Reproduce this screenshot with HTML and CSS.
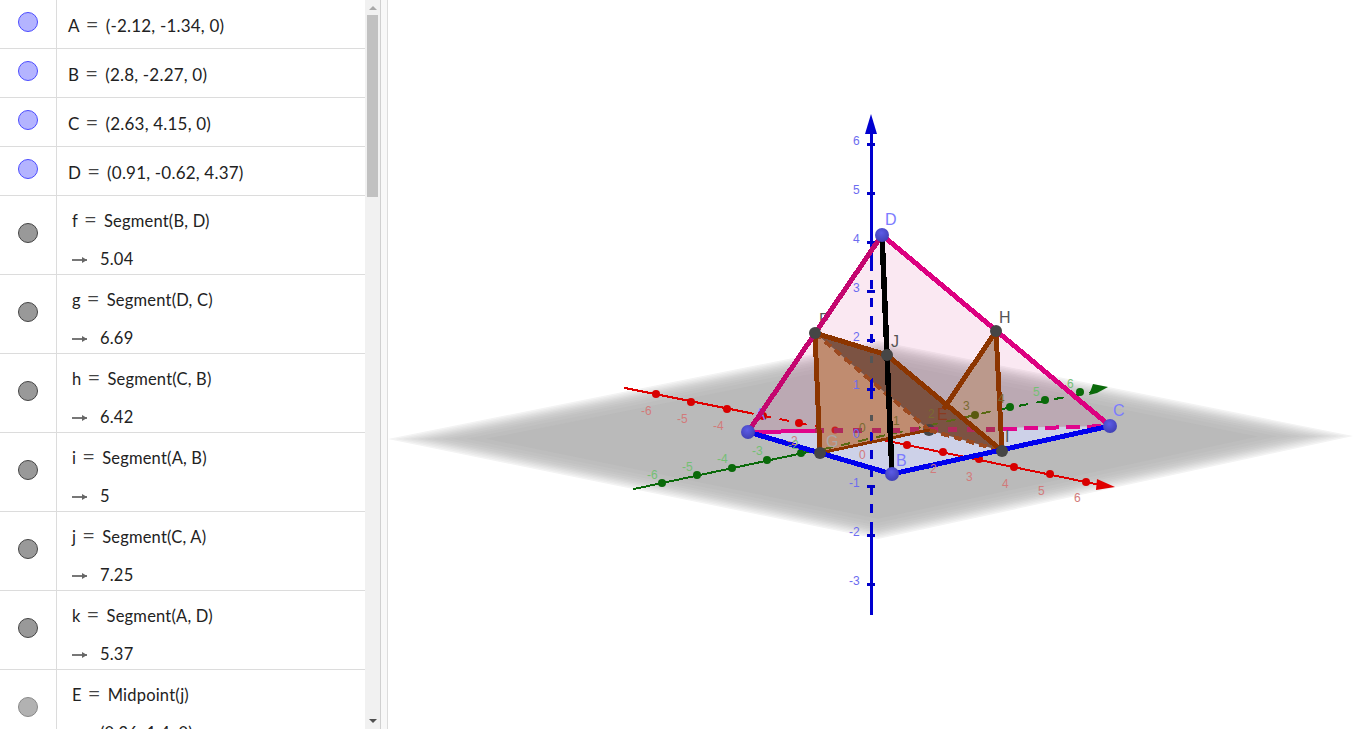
FILE: index.html
```html
<!DOCTYPE html>
<html lang="en">
<head>
    <meta charset="UTF-8">
    <meta name="viewport" content="width=device-width, initial-scale=1.0">
    <title>Pyramid section</title>
    <link rel="stylesheet" href="styles.css">
</head>
<body>
    <div class="app">
        <div class="algebra">
            <div class="rows">
                <div class="row point"><div class="marble-cell"><span class="marble blue"></span></div><div class="def">A<span class="eq">=</span>(-2.12, -1.34, 0)</div></div>
                <div class="row point"><div class="marble-cell"><span class="marble blue"></span></div><div class="def">B<span class="eq">=</span>(2.8, -2.27, 0)</div></div>
                <div class="row point"><div class="marble-cell"><span class="marble blue"></span></div><div class="def">C<span class="eq">=</span>(2.63, 4.15, 0)</div></div>
                <div class="row point"><div class="marble-cell"><span class="marble blue"></span></div><div class="def">D<span class="eq">=</span>(0.91, -0.62, 4.37)</div></div>
                <div class="row tall"><div class="marble-cell"><span class="marble grey"></span></div><div class="def"><p>f<span class="eq">=</span>Segment(B, D)</p><p class="value"><span class="arrow"></span>5.04</p></div></div>
                <div class="row tall"><div class="marble-cell"><span class="marble grey"></span></div><div class="def"><p>g<span class="eq">=</span>Segment(D, C)</p><p class="value"><span class="arrow"></span>6.69</p></div></div>
                <div class="row tall"><div class="marble-cell"><span class="marble grey"></span></div><div class="def"><p>h<span class="eq">=</span>Segment(C, B)</p><p class="value"><span class="arrow"></span>6.42</p></div></div>
                <div class="row tall"><div class="marble-cell"><span class="marble grey"></span></div><div class="def"><p>i<span class="eq">=</span>Segment(A, B)</p><p class="value"><span class="arrow"></span>5</p></div></div>
                <div class="row tall"><div class="marble-cell"><span class="marble grey"></span></div><div class="def"><p>j<span class="eq">=</span>Segment(C, A)</p><p class="value"><span class="arrow"></span>7.25</p></div></div>
                <div class="row tall"><div class="marble-cell"><span class="marble grey"></span></div><div class="def"><p>k<span class="eq">=</span>Segment(A, D)</p><p class="value"><span class="arrow"></span>5.37</p></div></div>
                <div class="row tall"><div class="marble-cell"><span class="marble light"></span></div><div class="def"><p>E<span class="eq">=</span>Midpoint(j)</p><p class="value"><span class="arrow"></span>(0.26, 1.4, 0)</p></div></div>
            </div>
            <div class="scrollbar">
                <span class="scroll-up"></span>
                <div class="track"><div class="thumb"></div></div>
                <span class="scroll-down"></span>
            </div>
        </div>
        <div class="splitter"></div>
        <div class="graphics">
            <svg class="scene" viewBox="388 0 968 729" width="968" height="729">
                <defs>
                    <polygon id="plane" points="388,439 878,341 1353,436 878,539"/>
                    <radialGradient id="ball-blue" cx="0.45" cy="0.35" r="0.65">
                        <stop offset="0" stop-color="#5c5ce6"/>
                        <stop offset="1" stop-color="#4040b4"/>
                    </radialGradient>
                </defs>

                <!-- xOy plane, fades out at the rim -->
                <g class="plane">
                    <use href="#plane" fill="#f3f3f3"/>
                    <use href="#plane" fill="#ebebeb" transform="translate(878 438) scale(.985) translate(-878 -438)"/>
                    <use href="#plane" fill="#e4e4e4" transform="translate(878 438) scale(.97) translate(-878 -438)"/>
                    <use href="#plane" fill="#dddddd" transform="translate(878 438) scale(.955) translate(-878 -438)"/>
                    <use href="#plane" fill="#d6d6d6" transform="translate(878 438) scale(.94) translate(-878 -438)"/>
                    <use href="#plane" fill="#d0d0d0" transform="translate(878 438) scale(.925) translate(-878 -438)"/>
                    <use href="#plane" fill="#cbcbcb" transform="translate(878 438) scale(.91) translate(-878 -438)"/>
                    <use href="#plane" fill="#c6c6c6" transform="translate(878 438) scale(.89) translate(-878 -438)"/>
                    <use href="#plane" fill="#c2c2c2" transform="translate(878 438) scale(.87) translate(-878 -438)"/>
                    <use href="#plane" fill="#bebebe" transform="translate(878 438) scale(.84) translate(-878 -438)"/>
                    <use href="#plane" fill="#bababa" transform="translate(878 438) scale(.8) translate(-878 -438)"/>
                </g>

                <!-- faces -->
                <polygon class="base" points="748,432 892,474 1110,426"/>
                <polygon class="face" points="748,432 882,235 1110,426"/>

                <!-- x axis -->
                <line class="ax-x" x1="625" y1="388" x2="745" y2="412"/>
                <line class="ax-x dash" x1="745" y1="412" x2="878" y2="439"/>
                <line class="ax-x" x1="878" y1="439" x2="1100" y2="485"/>
                <polygon class="tip-x" points="1115,487 1097,479 1096,490"/>
                <g class="tick-x">
                    <circle cx="656" cy="394" r="4"/><circle cx="691" cy="402" r="4"/><circle cx="727" cy="409" r="4"/>
                    <circle cx="763" cy="416" r="4"/><circle cx="799" cy="423" r="4"/>
                    <circle cx="907" cy="445" r="4"/><circle cx="943" cy="452" r="4"/><circle cx="979" cy="459" r="4"/>
                    <circle cx="1014" cy="467" r="4"/><circle cx="1050" cy="474" r="4"/><circle cx="1086" cy="482" r="4"/>
                </g>

                <!-- y axis, near part -->
                <line class="ax-y" x1="634" y1="489" x2="822" y2="449"/>
                <g class="tick-y">
                    <circle cx="662" cy="483" r="4"/><circle cx="697" cy="475" r="4"/><circle cx="732" cy="468" r="4"/>
                    <circle cx="767" cy="460" r="4"/><circle cx="801" cy="453" r="4"/>
                </g>

                <!-- section through the pyramid -->
                <polygon class="sec-salmon" points="815,333 820,453 929,430"/>
                <polygon class="sec-light" points="996,331 1002,451 929,430"/>
                <polygon class="sec-dark" points="815,333 887,355 1002,451 929,430"/>

                <!-- what shows through the section -->
                <circle class="tick-through" cx="835" cy="430" r="3.5"/>
                <line class="ax-y dash olive" x1="824" y1="449" x2="1002" y2="409"/>
                <line class="ax-y dash" x1="1002" y1="409" x2="1092" y2="392"/>
                <polygon class="tip-y" points="1108,387 1093,384 1089,395 1097,393"/>
                <circle class="tick-olive" cx="975" cy="415" r="4"/>
                <g class="tick-y">
                    <circle cx="1010" cy="407" r="4"/><circle cx="1045" cy="400" r="4"/><circle cx="1080" cy="392" r="4"/>
                </g>

                <!-- z axis -->
                <line class="ax-z" x1="871" y1="125" x2="871" y2="262"/>
                <line class="ax-z dash-z" x1="871" y1="262" x2="871" y2="352"/>
                <line class="ax-z grey" x1="871" y1="356" x2="871" y2="363"/>
                <line class="ax-z" x1="871" y1="378" x2="871" y2="399"/>
                <line class="ax-z grey" x1="871" y1="415" x2="871" y2="421"/>
                <line class="ax-z dash-z" x1="871" y1="432" x2="871" y2="528"/>
                <line class="ax-z" x1="871" y1="528" x2="871" y2="615"/>
                <polygon class="tip-z" points="871,114 865,134 877,134"/>
                <g class="tick-z">
                    <rect x="867" y="143" width="8" height="3"/><rect x="867" y="192" width="8" height="3"/><rect x="867" y="241" width="8" height="3"/>
                    <rect x="867" y="290" width="8" height="3"/><rect x="867" y="339" width="8" height="3"/><rect x="867" y="388" width="8" height="3"/>
                    <rect x="867" y="485" width="8" height="3"/><rect x="867" y="534" width="8" height="3"/><rect x="867" y="583" width="8" height="3"/>
                </g>

                <!-- names that the edges run over -->
                <g class="name">
                    <text class="name-blue" x="755" y="420">A</text>
                    <text class="name-grey" x="819" y="325">F</text>
                    <text class="name-brown" x="937" y="420">E</text>
                </g>
                <circle class="dot-dark" cx="929" cy="430" r="6"/>

                <!-- edge AC, dashed where it runs behind -->
                <line class="edge-ac" x1="748" y1="432" x2="815" y2="431"/>
                <line class="edge-ac dash-ac" x1="815" y1="431" x2="1000" y2="429"/>
                <line class="edge-ac dash-wide" x1="1003" y1="429" x2="1110" y2="426"/>

                <!-- section edges -->
                <line class="brown dash-b" x1="815" y1="333" x2="929" y2="430"/>
                <line class="brown dash-b" x1="929" y1="430" x2="1002" y2="451"/>
                <line class="brown thin" x1="820" y1="453" x2="929" y2="430"/>
                <line class="brown" x1="945" y1="407" x2="996" y2="331"/>
                <line class="brown" x1="815" y1="333" x2="820" y2="453"/>
                <line class="brown" x1="996" y1="331" x2="1002" y2="451"/>
                <line class="brown" x1="815" y1="333" x2="887" y2="355"/>
                <line class="brown" x1="887" y1="355" x2="1002" y2="451"/>

                <!-- pyramid edges -->
                <line class="edge-blue" x1="748" y1="432" x2="892" y2="474"/>
                <line class="edge-blue" x1="892" y1="474" x2="1110" y2="426"/>
                <line class="edge-pink-l" x1="748" y1="432" x2="882" y2="235"/>
                <line class="edge-pink-r" x1="882" y1="235" x2="1110" y2="426"/>
                <line class="edge-black" x1="882" y1="235" x2="892" y2="474"/>

                <!-- axis numbers -->
                <g class="num num-z">
                    <text x="853" y="145">6</text><text x="853" y="194">5</text><text x="853" y="243">4</text><text x="853" y="292">3</text>
                    <text x="853" y="341">2</text><text x="853" y="389">1</text><text x="853" y="438">0</text>
                    <text x="849" y="487">-1</text><text x="849" y="536">-2</text><text x="849" y="585">-3</text>
                </g>
                <g class="num num-x">
                    <text x="641" y="415">-6</text><text x="677" y="423">-5</text><text x="713" y="430">-4</text><text x="787" y="445">-2</text>
                    <text x="859" y="459">0</text><text x="930" y="473">2</text><text x="966" y="481">3</text>
                    <text x="1002" y="488">4</text><text x="1038" y="495">5</text><text x="1074" y="502">6</text>
                </g>
                <g class="num num-y">
                    <text x="647" y="479">-6</text><text x="682" y="471">-5</text><text x="717" y="463">-4</text><text x="752" y="455">-3</text><text x="788" y="449">-2</text>
                    <text x="1033" y="396">5</text><text x="1067" y="388">6</text>
                </g>
                <g class="num num-dark">
                    <text x="859" y="432">0</text><text x="893" y="425">1</text><text x="928" y="418">2</text><text x="963" y="410">3</text><text x="998" y="403">4</text>
                </g>

                <!-- points -->
                <g class="dot-dark">
                    <circle cx="815" cy="333" r="6"/><circle cx="996" cy="331" r="6"/><circle cx="887" cy="355" r="6"/>
                    <circle cx="820" cy="453" r="6"/><circle cx="1002" cy="451" r="6"/>
                </g>
                <g fill="url(#ball-blue)">
                    <circle cx="748" cy="432" r="7"/><circle cx="892" cy="474" r="7"/><circle cx="1110" cy="426" r="7"/><circle cx="882" cy="235" r="7"/>
                </g>

                <!-- point names -->
                <g class="name">
                    <text class="name-blue" x="896" y="466">B</text><text class="name-blue" x="1113" y="416">C</text><text class="name-blue" x="885" y="225">D</text>
                    <text class="name-grey" x="999" y="323">H</text><text class="name-grey" x="891" y="347">J</text>
                    <text class="name-pale" x="826" y="447">G</text><text class="name-grey" x="1005" y="442">I</text>
                </g>
            </svg>
        </div>
    </div>
</body>
</html>
```

FILE: styles.css
```css
body {
    margin: 0;
    background-color: #fff;
    font-family: Lato, "Open Sans", sans-serif;
    color: #222;
}
.app {
    display: flex;
    height: 729px;
    overflow: hidden;
}
.algebra {
    display: flex;
    flex: none;
    width: 380px;
    border-right: 1px solid #d0d0d0;
}
.rows {
    flex: none;
    width: 365px;
    height: 729px;
    overflow: hidden;
}
.row {
    display: flex;
    box-sizing: border-box;
    border-bottom: 1px solid #dcdcdc;
}
.row.point {
    height: 49px;
}
.row.tall {
    height: 79px;
}
.marble-cell {
    display: flex;
    flex: none;
    box-sizing: border-box;
    width: 57px;
    padding-left: 18px;
    align-items: center;
    border-right: 1px solid #dcdcdc;
}
.row.point .marble-cell {
    padding-bottom: 4px;
}
.row.tall .marble-cell {
    padding-bottom: 5px;
}
.marble {
    display: block;
    box-sizing: border-box;
    width: 20px;
    height: 20px;
    border-radius: 50%;
    border: 1px solid #444;
}
.marble.blue {
    background-color: #b4b4ff;
    border-color: #4c4cff;
}
.marble.grey {
    background-color: #999;
}
.marble.light {
    background-color: #b2b2b2;
    border-color: #888;
}
.def {
    font-size: 17px;
    letter-spacing: 0.2px;
}
.row.point .def {
    padding: 15px 0 0 11px;
    line-height: 22px;
}
.row.tall .def {
    padding: 14px 0 0 15px;
    font-size: 16.5px;
}
.def p {
    margin: 0;
    line-height: 22px;
}
.def .value {
    display: flex;
    align-items: center;
    margin-top: 16px;
}
.eq {
    margin: 0 7px 0 6px;
    font-size: 22px;
    line-height: 0;
    color: #444;
}
.arrow {
    position: relative;
    width: 15px;
    height: 2px;
    margin: 1px 13px 0 0;
    background-color: #777;
}
.arrow::after {
    content: "";
    position: absolute;
    right: 0;
    top: -2px;
    border-left: 5px solid #666;
    border-top: 3px solid transparent;
    border-bottom: 3px solid transparent;
}
.scrollbar {
    display: flex;
    flex-direction: column;
    flex: none;
    width: 15px;
    height: 729px;
    background-color: #f1f1f1;
}
.scroll-up, .scroll-down {
    flex: none;
    align-self: center;
    width: 0;
    border-left: 4px solid transparent;
    border-right: 4px solid transparent;
}
.scroll-up {
    margin-top: 6px;
    border-bottom: 4px solid #a8a8a8;
}
.scroll-down {
    margin-bottom: 6px;
    border-top: 4px solid #505050;
}
.track {
    flex: 1;
    padding: 5px 2px 0 2px;
}
.thumb {
    height: 182px;
    background-color: #c1c1c1;
}
.splitter {
    flex: none;
    width: 6px;
    background-color: #f8f8f8;
    border-right: 1px solid #dcdcdc;
}
.graphics {
    flex: 1;
}
.scene {
    display: block;
}

/* 3d scene */
.base {
    fill: #cdd1e8;
}
.face {
    fill: #c8006f;
    fill-opacity: 0.09;
}
.ax-x, .ax-y, .ax-z, .edge-ac, .brown, .edge-blue, .edge-pink-l, .edge-pink-r, .edge-black {
    shape-rendering: crispEdges;
    stroke-linecap: round;
}
.ax-x {
    stroke: #e00000;
    stroke-width: 2;
}
.ax-y {
    stroke: #0a6a0a;
    stroke-width: 2;
}
.ax-y.olive {
    stroke: #5a6a14;
}
.ax-z {
    stroke: #0000d0;
    stroke-width: 3;
    stroke-linecap: butt;
}
.ax-z.grey {
    stroke: #555;
}
.dash {
    stroke-dasharray: 8 10;
}
.dash-z {
    stroke-dasharray: 9 9;
}
.tip-x {
    fill: #e00000;
}
.tip-y {
    fill: #0a6a0a;
}
.tip-z {
    fill: #0000d0;
}
.tick-x {
    fill: #d80000;
}
.tick-through {
    fill: #c82020;
}
.tick-y {
    fill: #0a6a0a;
}
.tick-olive {
    fill: #5a5a10;
}
.tick-z {
    fill: #0000c8;
}
.sec-salmon {
    fill: #c08c70;
}
.sec-light {
    fill: #bb998c;
}
.sec-dark {
    fill: #7c5343;
}
.edge-ac {
    stroke: #e0058c;
    stroke-width: 4;
    stroke-linecap: butt;
}
.dash-ac {
    stroke: #b02a5c;
    stroke-dasharray: 9 10;
    stroke-width: 5;
}
.dash-wide {
    stroke-dasharray: 14 7;
}
.brown {
    stroke: #8c3500;
    stroke-width: 5;
}
.brown.thin {
    stroke-width: 3;
}
.brown.dash-b {
    stroke: #9c4a20;
    stroke-width: 4;
    stroke-dasharray: 8 5;
    stroke-linecap: butt;
}
.edge-blue {
    stroke: #0000ee;
    stroke-width: 5;
}
.edge-pink-l {
    stroke: #c4066f;
    stroke-width: 5;
}
.edge-pink-r {
    stroke: #dc0080;
    stroke-width: 5;
}
.edge-black {
    stroke: #000;
    stroke-width: 5.5;
}
.num {
    font-family: "Liberation Sans", sans-serif;
    font-size: 12px;
}
.num-z {
    fill: #6c6cf0;
}
.num-x {
    fill: #d27a7a;
}
.num-y {
    fill: #74c074;
}
.num-dark {
    fill: #7a6a30;
}
.dot-dark {
    fill: #464646;
}
.name {
    font-family: "Liberation Sans", sans-serif;
    font-size: 16px;
}
.name-blue {
    fill: #7c7cff;
}
.name-grey {
    fill: #555;
}
.name-pale {
    fill: #a8a8a8;
}
.name-brown {
    fill: #8c3a20;
}
```
